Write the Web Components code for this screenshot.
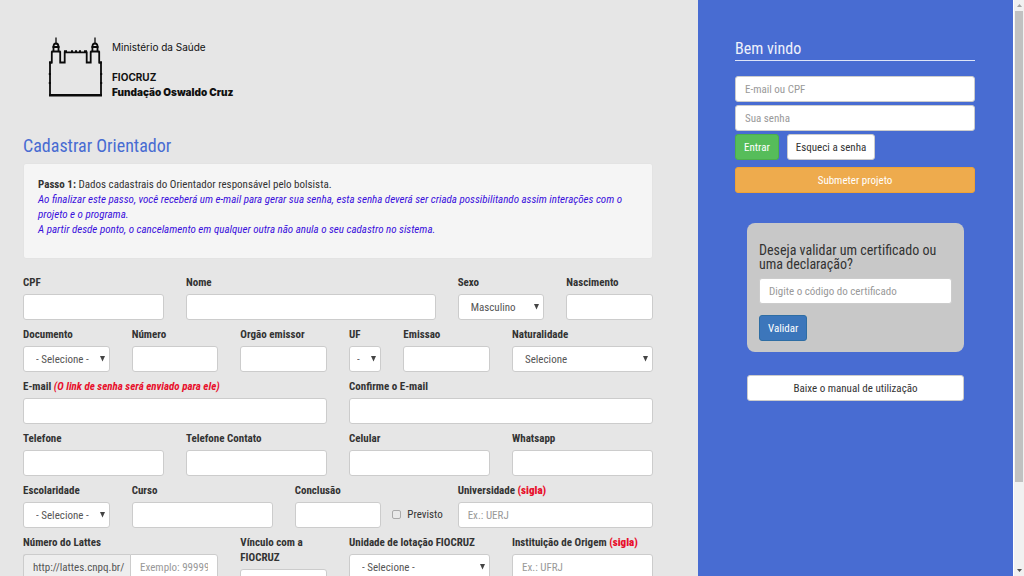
<!DOCTYPE html>
<html lang="pt-BR">
<head>
<meta charset="utf-8">
<meta name="viewport" content="width=device-width, initial-scale=1">
<title>Cadastrar Orientador</title>
<style>
  html, body { height: 100%; margin: 0; }
  body {
    --line: #ccc;
    font: 11px/15px "Roboto Condensed", "Liberation Sans Narrow", "Open Sans Condensed", Roboto, sans-serif;
    color: #333;
    background: #e6e6e6;
    overflow: hidden;
  }
</style>
</head>
<body>
<app-page>
  <main-panel>
    <fiocruz-logo></fiocruz-logo>
    <step-form></step-form>
  </main-panel>
  <side-panel slot="side">
    <login-box></login-box>
    <certificate-card></certificate-card>
    <ui-button class="manual">Baixe o manual de utilização</ui-button>
  </side-panel>
</app-page>

<script>
const define = (name, html, setup) => {
  const template = document.createElement('template');
  template.innerHTML = html;
  customElements.define(name, class extends HTMLElement {
    constructor() {
      super();
      this.attachShadow({ mode: 'open' }).append(template.content.cloneNode(true));
    }
    connectedCallback() {
      if (setup && !this.ready) setup(this, this.shadowRoot);
      this.ready = true;
    }
  });
};

const controlCss = `
  input, select {
    box-sizing: border-box; width: 100%; min-width: 0; height: 26px; margin: 0;
    padding: 4px 9px; border: 1px solid var(--line); border-radius: 3px;
    background: #fff; color: #555; font: inherit; appearance: none; outline: none;
  }
  input::placeholder { color: #999; opacity: 1; }`;

define('app-page', `
  <style>
    :host { display: grid; grid-template-columns: minmax(0, 1fr) 315px 11px; height: 100vh; }
    .scroll { min-height: 0; overflow-y: auto; scrollbar-width: none; }
    .side { background: #486cd2; }
  </style>
  <div class="scroll"><slot></slot></div>
  <div class="scroll side"><slot name="side"></slot></div>
  <scroll-rail></scroll-rail>`);

define('scroll-rail', `
  <style>
    :host { display: flex; flex-direction: column; align-items: center; background: #f1f1f1; border-left: 1px solid #fff; }
    svg { width: 9px; height: 11px; }
    .track { flex: 1; align-self: stretch; padding: 0 1px; }
    .thumb { height: 85%; background: #c1c1c1; }
  </style>
  <svg viewBox="0 0 9 11" aria-hidden="true"><path d="M2 7h5L4.500 4z" fill="#a3a3a3"/></svg>
  <div class="track"><div class="thumb"></div></div>
  <svg viewBox="0 0 9 11" aria-hidden="true"><path d="M2 4h5L4.500 7z" fill="#505050"/></svg>`);

define('main-panel', `
  <style>:host { display: block; padding: 37px 45px 24px 23px; }</style>
  <slot></slot>`);

define('fiocruz-logo', `
  <style>
    :host { display: flex; gap: 9px; padding-left: 25px; color: #111; }
    svg { width: 55px; height: 61px; flex: none; }
    .text { display: flex; flex-direction: column; padding-top: 3px; font: 10px/15px Inter, sans-serif; }
    .org { margin-top: 15px; font-weight: 700; }
    .name { font-weight: 900; }
  </style>
  <svg viewBox="0 0 55 61" fill="none" stroke="#0a0a0a" stroke-width="1.800" role="img" aria-label="Fiocruz">
    <path d="M2 58V25.500h1.800V15L5.500 14V10Q5.500 6.500 8 6.500T10.500 10v4l1.700 1V25.500h4.500V15.300h22v10.200h4V15l1.700-1V10Q44.400 6.500 47 6.500T49.500 10v4l1.700 1V25.500H53V58z"/>
    <path d="M4.500 10h7M43.500 10h7M3.500 14.500h9M42.500 14.500h9"/>
    <path d="M1 25.500h3M51 25.500h3M.8 37h2M.8 46h2M52.200 37h2M52.200 46h2" stroke-width="2"/>
    <path d="M8 7V.5M47 7V.5" stroke-width="1.300"/>
    <path d="M16 14.500h3M23 14.500h2M27 14.500h2M31 14.500h2M36 14.500h3" stroke-width="2.400"/>
    <path d="M1 58.300h53" stroke-width="2.400"/>
  </svg>
  <div class="text">
    <span>Ministério da Saúde</span>
    <span class="org">FIOCRUZ</span>
    <span class="name">Fundação Oswaldo Cruz</span>
  </div>`);

define('info-well', `
  <style>
    :host { display: block; padding: 13px 14px 21px; background: #f5f5f5; border: 1px solid #e3e3e3; border-radius: 3px; }
  </style>
  <slot></slot>`);

define('form-field', `
  <style>
    :host { display: flex; flex-direction: column; gap: 4px; min-width: 0; grid-column: span var(--span, 3); }
    label { font-weight: 700; }
    ::slotted(em), ::slotted(b) { color: #e8102c; }
    ${controlCss}
    .control { display: grid; grid-template-columns: minmax(0, 1fr); align-items: center; }
    .control > * { grid-row: 1; grid-column: 1; }
    svg { justify-self: end; width: 5px; height: 6px; margin-right: 5px; pointer-events: none; }
    select { padding: 0 12px; }
    .narrow select { padding: 0 7px; }
    .grouped { grid-template-columns: 107px minmax(0, 1fr); }
    .addon { box-sizing: border-box; height: 26px; padding: 5px 9px; border: 1px solid var(--line); border-right: 0; border-radius: 3px 0 0 3px; background: #eee; color: #555; }
    .grouped input { grid-column: 2; border-radius: 0 3px 3px 0; }
  </style>
  <label for="c"><slot></slot></label>
  <div class="control"></div>`, (host, root) => {
  const box = root.querySelector('.control');
  const span = host.getAttribute('span');
  host.style.setProperty('--span', span);
  if (host.hasAttribute('option')) {
    box.innerHTML = '<select id="c"><option></option></select><svg viewBox="0 0 5 6" aria-hidden="true"><path d="M0 0h5L2.500 5.500z" fill="#444"/></svg>';
    box.querySelector('option').textContent = host.getAttribute('option');
    box.classList.toggle('narrow', span === '1');
  } else {
    if (host.hasAttribute('prefix')) {
      box.classList.add('grouped');
      box.innerHTML = '<span class="addon"></span>';
      box.firstChild.textContent = host.getAttribute('prefix');
    }
    const input = document.createElement('input');
    input.id = 'c';
    input.type = 'text';
    input.placeholder = host.getAttribute('hint') || '';
    box.append(input);
  }
});

define('check-field', `
  <style>
    :host { display: flex; align-items: flex-end; align-self: end; grid-column: span 1; }
    label { display: flex; align-items: center; gap: 6px; height: 28px; margin-left: -11px; white-space: nowrap; }
    input { appearance: none; box-sizing: border-box; width: 9px; height: 9px; margin: 0; border: 1px solid #aaa; border-radius: 2px; background: #e9e9e9; }
  </style>
  <label><input type="checkbox"><slot></slot></label>`);

define('step-form', `
  <style>
    :host { display: block; }
    h1 { margin: 35px 0 7px; font-size: 18px; line-height: 21px; font-weight: 400; color: #486cd2; }
    i { color: #3a10dc; }
    form { display: grid; grid-template-columns: repeat(12, minmax(0, 1fr)); gap: 7px 22px; margin-top: 16px; align-items: start; }
  </style>
  <h1>Cadastrar Orientador</h1>
  <info-well><b>Passo 1:</b> Dados cadastrais do Orientador responsável pelo bolsista.<br>
    <i>Ao finalizar este passo, você receberá um e-mail para gerar sua senha, esta senha deverá ser criada possibilitando assim interações com o projeto e o programa.<br>
    A partir desde ponto, o cancelamento em qualquer outra não anula o seu cadastro no sistema.</i></info-well>
  <form>
    <form-field span="3">CPF</form-field>
    <form-field span="5">Nome</form-field>
    <form-field span="2" option="Masculino">Sexo</form-field>
    <form-field span="2">Nascimento</form-field>
    <form-field span="2" option="- Selecione -">Documento</form-field>
    <form-field span="2">Número</form-field>
    <form-field span="2">Orgão emissor</form-field>
    <form-field span="1" option="-">UF</form-field>
    <form-field span="2">Emissao</form-field>
    <form-field span="3" option="Selecione">Naturalidade</form-field>
    <form-field span="6">E-mail <em>(O link de senha será enviado para ele)</em></form-field>
    <form-field span="6">Confirme o E-mail</form-field>
    <form-field span="3">Telefone</form-field>
    <form-field span="3">Telefone Contato</form-field>
    <form-field span="3">Celular</form-field>
    <form-field span="3">Whatsapp</form-field>
    <form-field span="2" option="- Selecione -">Escolaridade</form-field>
    <form-field span="3">Curso</form-field>
    <form-field span="2">Conclusão</form-field>
    <check-field>Previsto</check-field>
    <form-field span="4" hint="Ex.: UERJ">Universidade <b>(sigla)</b></form-field>
    <form-field span="4" prefix="http://lattes.cnpq.br/" hint="Exemplo: 9999999999999999">Número do Lattes</form-field>
    <form-field span="2">Vínculo com a FIOCRUZ</form-field>
    <form-field span="3" option="- Selecione -">Unidade de lotação FIOCRUZ</form-field>
    <form-field span="3" hint="Ex.: UFRJ">Instituição de Origem <b>(sigla)</b></form-field>
  </form>`);

define('ui-button', `
  <style>
    :host { display: block; }
    button { box-sizing: border-box; width: 100%; height: 26px; padding: 0 8px; border: 1px solid var(--edge, #ccc); border-radius: 3px; background: var(--fill, #fff); color: var(--ink, #333); font: inherit; white-space: nowrap; }
  </style>
  <button type="button"><slot></slot></button>`);

define('side-panel', `
  <style>
    :host { display: block; padding: 39px 38px 24px 37px; }
    ::slotted(certificate-card) { margin: 30px 11px 23px 12px; }
    ::slotted(.manual) { margin: 0 11px 0 12px; }
  </style>
  <slot></slot>`);

define('login-box', `
  <style>
    :host { display: block; }
    h2 { margin: 0 0 15px; padding-bottom: 2px; border-bottom: 1px solid #dde4f7; font-size: 16px; line-height: 19px; font-weight: 400; color: #eef1fb; }
    form { display: grid; gap: 3px; }
    .row { display: flex; gap: 8px; margin-bottom: 4px; }
    .ok { --fill: #56bd5a; --edge: #4cae4c; --ink: #fff; }
    .warn { --fill: #eeab4d; --edge: #eea236; --ink: #fff; }
    ${controlCss}
  </style>
  <h2>Bem vindo</h2>
  <form>
    <input type="text" placeholder="E-mail ou CPF" aria-label="E-mail ou CPF">
    <input type="password" placeholder="Sua senha" aria-label="Sua senha">
    <div class="row"><ui-button class="ok">Entrar</ui-button><ui-button>Esqueci a senha</ui-button></div>
    <ui-button class="warn">Submeter projeto</ui-button>
  </form>`);

define('certificate-card', `
  <style>
    :host { display: block; padding: 20px 12px 11px; border-radius: 8px; background: #c8c8c8; }
    h3 { margin: 0 0 7px; font-size: 14px; line-height: 14px; font-weight: 400; }
    form { display: grid; gap: 11px; justify-items: start; }
    .go { --fill: #3c76bb; --edge: #2e6da4; --ink: #fff; }
    ${controlCss}
  </style>
  <h3>Deseja validar um certificado ou uma declaração?</h3>
  <form>
    <input type="text" placeholder="Digite o código do certificado" aria-label="Código do certificado">
    <ui-button class="go">Validar</ui-button>
  </form>`);
</script>
</body>
</html>
